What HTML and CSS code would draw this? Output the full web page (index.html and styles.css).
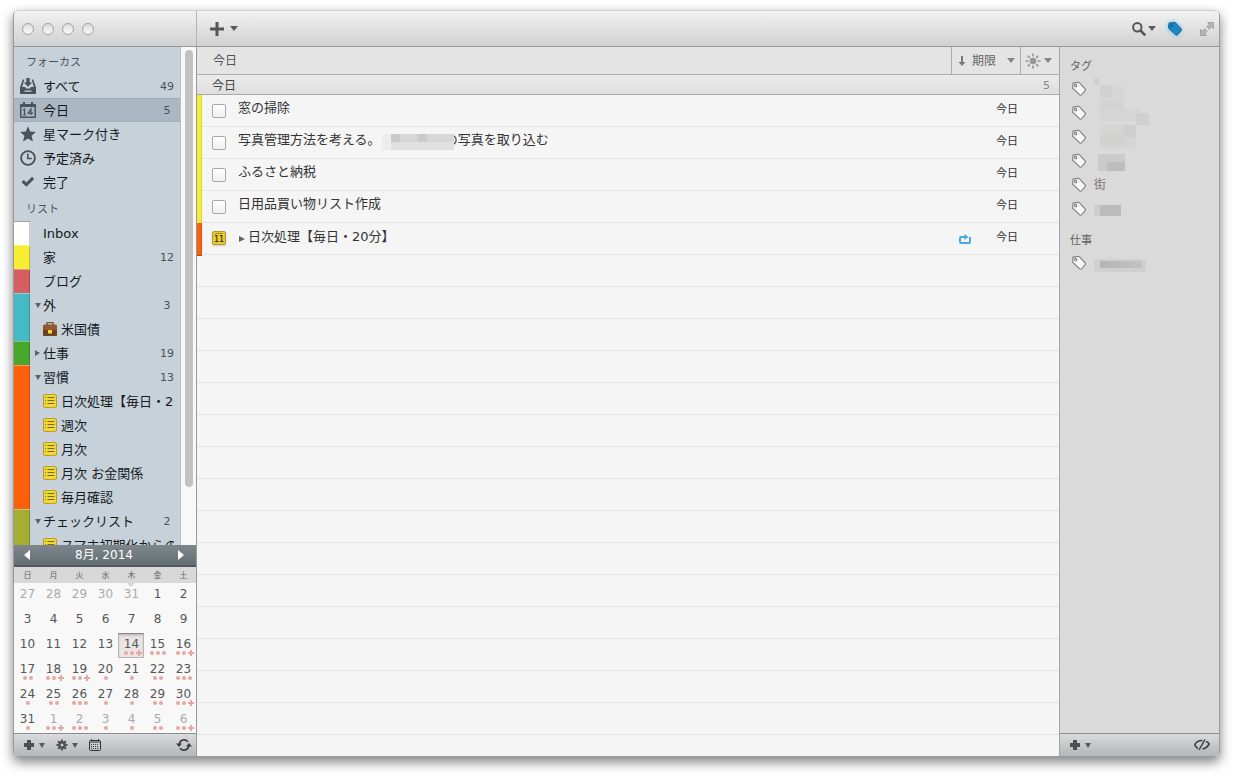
FILE: index.html
```html
<!DOCTYPE html>
<html lang="ja">
<head>
<meta charset="utf-8">
<title>今日</title>
<link rel="stylesheet" href="styles.css">
</head>
<body>
<svg class="defs" aria-hidden="true">
  <symbol id="tag" viewBox="0 0 16 16"><path d="M2 2.2 L7.2 1.4 Q8 1.3 8.6 1.9 L14.2 8 Q14.8 8.8 14.2 9.6 L10.4 13.9 Q9.6 14.6 8.8 13.9 L2.2 7.8 Q1.6 7.2 1.6 6.4 Z"/><circle cx="4.6" cy="4.6" r="1.2"/></symbol>
  <symbol id="list" viewBox="0 0 14 14"><rect x=".5" y=".5" width="13" height="13" rx="1.5" fill="#ecd93a" stroke="#c39a22"/><path d="M4.5 3.5h7M4.5 6.5h7M4.5 9.5h7" stroke="#7d6b18"/><path d="M2 3.5h1M2 6.5h1M2 9.5h1" stroke="#7d6b18"/></symbol>
  <symbol id="plus" viewBox="0 0 12 12"><path d="M4 1h4v3h3v4H8v3H4V8H1V4h3z" fill="#4c4f51"/></symbol>
  <symbol id="d1" viewBox="0 0 20 6"><circle cx="10" cy="3" r="2"/></symbol>
  <symbol id="d2" viewBox="0 0 20 6"><circle cx="7" cy="3" r="2"/><circle cx="13" cy="3" r="2"/></symbol>
  <symbol id="d3" viewBox="0 0 20 6"><circle cx="4" cy="3" r="2"/><circle cx="10" cy="3" r="2"/><circle cx="16" cy="3" r="2"/></symbol>
  <symbol id="d4" viewBox="0 0 20 6"><circle cx="4" cy="3" r="2"/><circle cx="10" cy="3" r="2"/><path d="M16 0h2v2h2v2h-2v2h-2V4h-2V2h2z"/></symbol>
</svg>

<div class="window">
  <header class="titlebar">
    <div class="lights"><button aria-label="閉じる"></button><button aria-label="しまう"></button><button aria-label="拡大"></button><button aria-label="ミニ"></button></div>
    <button class="tool add" aria-label="追加"><svg width="16" height="16"><path d="M6.5 1h3v5.5H15v3H9.5V15h-3V9.5H1v-3h5.5z" fill="#555"/></svg><i class="down"></i></button>
    <div class="tools">
      <button class="tool" aria-label="検索"><svg width="16" height="16" fill="none" stroke="#555"><circle cx="6.3" cy="6.3" r="4.2" stroke-width="2"/><path d="M9.5 9.5l4.8 4.8" stroke-width="2.5"/></svg><i class="down"></i></button>
      <button class="tool tagtool" aria-label="タグ"><svg width="16" height="16"><use href="#tag"/></svg></button>
      <button class="tool" aria-label="全画面"><svg width="16" height="16" viewBox="0 0 16 16" fill="#b5b5b5" stroke="#909090" stroke-width=".7"><path d="M8.500 1.500h6v6l-1.800-1.800-2.500 2.500-2.400-2.400 2.500-2.500zM1.500 8.500v6h6l-1.800-1.800 2.500-2.500-2.400-2.400-2.500 2.500z"/></svg></button>
    </div>
  </header>

  <div class="body">
    <aside class="sidebar">
      <div class="scroll">
        <nav class="nav">
          <h2>フォーカス</h2>
          <ul>
            <li class="row focus"><svg class="ficon" viewBox="0 0 16 16"><path d="M6.300 0h3.400v4.500h2.500L8 8.800 3.800 4.500h2.500z"/><path fill-rule="evenodd" d="M2.800 1.500H4.300L2.300 9h3l.7 1.500h4L10.700 9h3L11.700 1.500h1.500L16 9.500V15q0 1-1 1H1q-1 0-1-1V9.500zM4.500 12.500v1.200h7v-1.200z"/></svg><span class="label">すべて</span><span class="count">49</span></li>
            <li class="row focus selected"><svg class="ficon" viewBox="0 0 16 16"><path fill-rule="evenodd" d="M1 2h2V0h2v2h6V0h2v2h2q1 0 1 1v12q0 1-1 1H1q-1 0-1-1V3q0-1 1-1zM1.500 5v9.500h13V5z"/><path d="M3 8l1.500-1v6M3 13h3M11 13V7L8 11.200h5" fill="none" stroke="#4a5359" stroke-width="1.200"/></svg><span class="label">今日</span><span class="count">5</span></li>
            <li class="row focus"><svg class="ficon" viewBox="0 0 16 16"><path d="M8 .3l2.200 5.200 5.600.5-4.200 3.800 1.300 5.700L8 12.500l-4.900 3 1.300-5.700L.2 6l5.600-.5z"/></svg><span class="label">星マーク付き</span></li>
            <li class="row focus"><svg class="ficon" viewBox="0 0 16 16"><circle cx="8" cy="8" r="6.900" fill="none" stroke="#4a5359" stroke-width="1.900"/><path d="M7.800 3.500v5h4" fill="none" stroke="#4a5359" stroke-width="1.700"/></svg><span class="label">予定済み</span></li>
            <li class="row focus"><svg class="ficon" viewBox="0 0 16 16"><path d="M1.500 8.200l2.200-2.200L6.500 8.500 12 2.800l2.200 2.200-7.700 7.800z"/></svg><span class="label">完了</span></li>
          </ul>
          <h2>リスト</h2>
          <ul>
            <li class="row list first white"><i class="disc"></i><span class="label">Inbox</span></li>
            <li class="row list first yellow"><i class="disc"></i><span class="label">家</span><span class="count">12</span></li>
            <li class="row list first red"><i class="disc"></i><span class="label">ブログ</span></li>
            <li class="row list first teal"><i class="disc open"></i><span class="label">外</span><span class="count">3</span></li>
            <li class="row list teal"><i class="disc"></i><svg class="licon" viewBox="0 0 14 14"><path d="M4 3V1q0-.5.500-.5h5q.5 0 .5.500v2" fill="none" stroke="#8a5427" stroke-width="1.500"/><rect y="2.500" width="14" height="11.500" rx="1.500" fill="#8f5a33"/><path d="M0 8h14v4.500q0 1.500-1.500 1.500h-11Q0 14 0 12.500z" fill="#70401f"/><rect x="5" y="8" width="4" height="3.500" rx=".5" fill="#f4dc30"/></svg><span class="label">米国債</span></li>
            <li class="row list first green"><i class="disc shut"></i><span class="label">仕事</span><span class="count">19</span></li>
            <li class="row list first orange"><i class="disc open"></i><span class="label">習慣</span><span class="count">13</span></li>
            <li class="row list orange"><i class="disc"></i><svg class="licon"><use href="#list"/></svg><span class="label">日次処理【毎日・20分】</span></li>
            <li class="row list orange"><i class="disc"></i><svg class="licon"><use href="#list"/></svg><span class="label">週次</span></li>
            <li class="row list orange"><i class="disc"></i><svg class="licon"><use href="#list"/></svg><span class="label">月次</span></li>
            <li class="row list orange"><i class="disc"></i><svg class="licon"><use href="#list"/></svg><span class="label">月次 お金関係</span></li>
            <li class="row list orange"><i class="disc"></i><svg class="licon"><use href="#list"/></svg><span class="label">毎月確認</span></li>
            <li class="row list first olive"><i class="disc open"></i><span class="label">チェックリスト</span><span class="count">2</span></li>
            <li class="row list olive"><i class="disc"></i><svg class="licon"><use href="#list"/></svg><span class="label">スマホ初期化からの復元</span></li>
          </ul>
        </nav>
        <div class="track"><div class="thumb"></div></div>
      </div>

      <section class="calendar">
        <div class="month"><button aria-label="前の月"><i class="prev"></i></button><span>8月, 2014</span><button aria-label="次の月"><i class="next"></i></button></div>
        <table>
          <thead><tr><th>日</th><th>月</th><th>火</th><th>水</th><th class="now">木</th><th>金</th><th>土</th></tr></thead>
          <tbody>
            <tr><td class="out">27</td><td class="out">28</td><td class="out">29</td><td class="out">30</td><td class="out">31</td><td>1</td><td>2</td></tr>
            <tr><td>3</td><td>4</td><td>5</td><td>6</td><td>7</td><td>8</td><td>9</td></tr>
            <tr><td>10</td><td>11</td><td>12</td><td>13</td><td class="today">14<svg><use href="#d4"/></svg></td><td>15<svg><use href="#d3"/></svg></td><td>16<svg><use href="#d4"/></svg></td></tr>
            <tr><td>17<svg><use href="#d2"/></svg></td><td>18<svg><use href="#d4"/></svg></td><td>19<svg><use href="#d4"/></svg></td><td>20<svg><use href="#d1"/></svg></td><td>21<svg><use href="#d1"/></svg></td><td>22<svg><use href="#d2"/></svg></td><td>23<svg><use href="#d3"/></svg></td></tr>
            <tr><td>24<svg><use href="#d1"/></svg></td><td>25<svg><use href="#d2"/></svg></td><td>26<svg><use href="#d3"/></svg></td><td>27<svg><use href="#d1"/></svg></td><td>28<svg><use href="#d1"/></svg></td><td>29<svg><use href="#d2"/></svg></td><td>30<svg><use href="#d4"/></svg></td></tr>
            <tr><td>31<svg><use href="#d1"/></svg></td><td class="out">1<svg><use href="#d4"/></svg></td><td class="out">2<svg><use href="#d3"/></svg></td><td class="out">3<svg><use href="#d1"/></svg></td><td class="out">4<svg><use href="#d1"/></svg></td><td class="out">5<svg><use href="#d2"/></svg></td><td class="out">6<svg><use href="#d4"/></svg></td></tr>
          </tbody>
        </table>
      </section>
      <footer class="bar">
        <button class="tool" aria-label="リストを追加"><svg width="12" height="12"><use href="#plus"/></svg><i class="down"></i></button>
        <button class="tool" aria-label="設定"><svg width="12" height="12" viewBox="0 0 12 12"><circle cx="6" cy="6" r="2.700" fill="none" stroke="#4c4f51" stroke-width="2.400"/><path d="M6 .5v2M6 9.500v2M.5 6h2M9.500 6h2M2.100 2.100l1.400 1.400M8.500 8.500l1.400 1.400M9.900 2.100L8.500 3.500M3.500 8.500L2.100 9.900" stroke="#4c4f51" stroke-width="1.800"/></svg><i class="down"></i></button>
        <button class="tool" aria-label="カレンダー"><svg width="12" height="12" viewBox="0 0 12 12"><path d="M2.500 0v2M9.500 0v2" stroke="#333"/><rect x=".5" y="1.500" width="11" height="10" rx="1" fill="none" stroke="#333"/><path d="M1 3h10" stroke="#333"/><path d="M2 5.500h8M2 7.500h8M2 9.500h8" stroke="#444" stroke-dasharray="1 1"/></svg></button>
        <button class="tool end" aria-label="同期"><svg width="16" height="14" viewBox="0 0 16 14" fill="none" stroke="#3c3f41" stroke-width="1.600"><path d="M3.200 6A5 5 0 0 1 12 3.800M12.800 8A5 5 0 0 1 4 10.200"/><path d="M0 5.500h6L3 9zM16 8.500h-6L13 5z" fill="#3c3f41" stroke="none"/></svg></button>
      </footer>
    </aside>

    <main class="main">
      <div class="colhead"><h1>今日</h1>
        <button class="sort"><svg width="8" height="10"><path d="M3 0h2v6h2.500L4 10 .5 6H3z" fill="#777"/></svg><span>期限</span><i class="down"></i></button>
        <button class="view" aria-label="表示設定"><svg width="16" height="16" viewBox="0 0 16 16"><circle cx="8" cy="8" r="3.300" fill="#999"/><path d="M8 .5v3M8 12.500v3M.5 8h3M12.500 8h3M2.700 2.700l2.100 2.100M11.200 11.200l2.100 2.100M13.300 2.700l-2.100 2.100M4.800 11.200l-2.100 2.100" stroke="#999" stroke-width="1.700"/></svg><i class="down"></i></button>
      </div>
      <div class="group"><h2>今日</h2><span>5</span></div>
      <ul class="tasks">
        <li class="task yellow"><input type="checkbox" id="t1"><label for="t1">窓の掃除</label><span class="due">今日</span></li>
        <li class="task yellow"><input type="checkbox" id="t2"><label for="t2">写真管理方法を考える。<span class="mosaic"><i></i><i></i><i></i><i></i><i></i><i></i><i></i><i></i><i></i><i></i><i></i><i></i><i></i><i></i><i></i><i></i></span>の写真を取り込む</label><span class="due">今日</span></li>
        <li class="task yellow"><input type="checkbox" id="t3"><label for="t3">ふるさと納税</label><span class="due">今日</span></li>
        <li class="task yellow"><input type="checkbox" id="t4"><label for="t4">日用品買い物リスト作成</label><span class="due">今日</span></li>
        <li class="task orange"><span class="badge">11</span><button class="expand" aria-label="展開"><i class="right"></i></button><span class="name">日次処理【毎日・20分】</span><svg class="repeat" width="12" height="11" viewBox="0 0 12 11"><path d="M2.500 3H2q-1 0-1 1v4q0 1 1 1h8q1 0 1-1V3M2.500 3H7" fill="none" stroke="#4ba9df" stroke-width="2"/><path d="M5.500 0l4 3-4 3z" fill="#4ba9df"/></svg><span class="due">今日</span></li>
      </ul>
    </main>

    <aside class="tags">
      <div class="taglist">
        <h2>タグ</h2>
        <ul>
          <li><svg><use href="#tag"/></svg><span class="blur b1"></span></li>
          <li><svg><use href="#tag"/></svg><span class="blur b2"></span></li>
          <li><svg><use href="#tag"/></svg><span class="blur b3"></span></li>
          <li><svg><use href="#tag"/></svg><span class="blur b4"></span></li>
          <li><svg><use href="#tag"/></svg><span>街</span></li>
          <li><svg><use href="#tag"/></svg><span class="blur b6"></span></li>
        </ul>
        <h2>仕事</h2>
        <ul><li><svg><use href="#tag"/></svg><span class="blur b7"></span></li></ul>
      </div>
      <footer class="bar tagbar">
        <button class="tool" aria-label="タグを追加"><svg width="12" height="12"><use href="#plus"/></svg><i class="down"></i></button>
        <button class="tool end" aria-label="隠す"><svg width="16" height="12" viewBox="0 0 16 12" fill="none" stroke="#3c3f41" stroke-width="1.500"><path d="M8.500 1.500Q3.500 1 .8 5.500q.5 2.500 3 4M12 2.500q2 .5 3.200 2.500Q12.500 9.500 8.500 10M11 .5L5 11"/></svg></button>
      </footer>
    </aside>
  </div>
</div>
</body>
</html>
```
FILE: styles.css
```css
* { box-sizing: border-box; }
body {
  margin: 0;
  height: 100vh;
  padding: 10px 13px 19px;
  background: #fff;
  color: #333;
  font: 13px/18px "DejaVu Sans", "Noto Sans CJK JP", sans-serif;
}
h1, h2, ul { margin: 0; padding: 0; font-weight: normal; }
ul { list-style: none; }
button { margin: 0; padding: 0; border: 0; background: none; color: inherit; font: inherit; }
svg { display: block; flex: none; }
.defs { position: absolute; width: 0; height: 0; }

.window {
  height: 100%;
  display: flex;
  flex-direction: column;
  overflow: hidden;
  border: 1px solid #9a9a9a;
  border-top-color: #d0d0d0;
  border-radius: 5px;
  box-shadow: 0 5px 12px rgba(0, 0, 0, .5);
}
.titlebar {
  flex: none;
  display: flex;
  align-items: center;
  height: 36px;
  background: linear-gradient(#f2f2f2, #d0d0d0);
  border-bottom: 1px solid #989898;
}
.lights {
  display: flex;
  align-items: center;
  gap: 8px;
  width: 183px;
  height: 100%;
  padding-left: 8px;
  border-right: 1px solid #b4b4b4;
}
.lights button {
  width: 12px;
  height: 12px;
  border: 1px solid #a3a3a3;
  border-radius: 50%;
  background: linear-gradient(#dcdcdc, #fafafa);
}
.tool { display: flex; align-items: center; gap: 4px; }
.add { padding-left: 12px; }
.add .down { margin-left: 1px; }
.tools { display: flex; align-items: center; gap: 16px; margin-left: auto; padding-right: 4px; }
.tools .down { margin: 0 -5px 0 -3px; }
.tagtool { fill: #1d86c4; stroke: #125f92; filter: drop-shadow(0 0 2px #5cc0f5); }
.tagtool circle { fill: #fff; }
.down, .right, .prev, .next { display: block; width: 0; height: 0; border: solid transparent; }
.down { border-width: 5px 4px 0; border-top-color: #5a5a5a; }
.right { border-width: 3px 0 3px 6px; border-left-color: #666; }
.prev { border-width: 5px 6px 5px 0; border-right-color: #fff; }
.next { border-width: 5px 0 5px 6px; border-left-color: #fff; }

.body { flex: 1; min-height: 0; display: flex; }
.sidebar {
  flex: none;
  display: flex;
  flex-direction: column;
  width: 183px;
  border-right: 1px solid #96999c;
}
.scroll { flex: 1; min-height: 0; display: flex; overflow: hidden; background: #f8f8f8; }
.nav { flex: 1; min-width: 0; background: #c6d1da; border-right: 1px solid #b3bfc9; color: #151a1e; }
.nav h2 { height: 27px; padding: 7px 12px 0; color: #46525b; font-size: 11px; }
.row { display: flex; align-items: center; height: 24px; }
.focus { padding-left: 6px; }
.selected { background: #abb7c3; border-top: 1px solid #9eabb7; border-bottom: 1px solid #a2aeba; }
.ficon { width: 16px; height: 16px; margin-right: 7px; fill: #4a5359; }
.label { flex: 1; min-width: 0; margin-right: 6px; padding-top: 1px; overflow: hidden; white-space: nowrap; }
.count { width: 24px; margin-right: 1px; padding-top: 1px; text-align: center; color: #46525b; font-size: 11px; }
.row:has(.count) .label { margin-right: 0; }
.list::before { content: ""; width: 16px; height: 24px; box-shadow: inset -1px 0 rgba(0, 0, 0, .2); }
.first::before { border-top: 1px solid rgba(255, 255, 255, .35); }
.white::before { background: #fff; border-top-color: #9aa4ac; }
.yellow::before { background: #f7ed32; }
.red::before { background: #d65e62; }
.teal::before { background: #45bac5; }
.green::before { background: #48a62a; }
.orange::before { background: #fd5f0b; }
.olive::before { background: #a4ae32; }
.disc { width: 13px; display: flex; padding-left: 5px; }
.open::after { content: ""; border: solid transparent; border-width: 5px 3px 0; border-top-color: #59636b; }
.shut::after { content: ""; border: solid transparent; border-width: 3px 0 3px 5px; border-left-color: #59636b; }
.licon { width: 14px; height: 14px; margin-right: 4px; }
.track { width: 15px; padding: 3px 3px 58px 4px; }
.thumb { height: 100%; border-radius: 4px; background: #c2c2c2; }

.calendar { flex: none; background: #f8f8f8; }
.month {
  display: flex;
  align-items: center;
  justify-content: space-between;
  height: 22px;
  padding: 0 12px 0 10px;
  background: linear-gradient(#7d878b, #646f73);
  border-bottom: 2px solid #50595d;
  color: #fff;
  font-size: 12px;
}
table { width: 100%; border-collapse: collapse; table-layout: fixed; }
thead { background: #d8d8d8; }
th { position: relative; height: 16px; padding: 1px 0 0 1px; color: #666; font-size: 8px; line-height: 15px; font-weight: normal; }
.now::after { content: ""; position: absolute; left: 9px; top: 16px; border: solid transparent; border-width: 4px 4px 0; border-top-color: #d8d8d8; }
td { height: 25px; padding: 4px 0 0 1px; vertical-align: top; text-align: center; color: #555; font-size: 12px; line-height: 14px; }
td svg { width: 20px; height: 6px; margin: -1px auto 0; fill: #e7a8a2; }
.out { color: #aaa; }
.today { background: #eae5e4; box-shadow: inset 0 1px #888, inset 0 0 0 1px #b5b5b5, inset 0 2px 3px #aaa; }
.bar {
  flex: none;
  display: flex;
  align-items: center;
  gap: 11px;
  height: 23px;
  padding: 0 4px 0 9px;
  border-top: 1px solid #8a8c8d;
  background: linear-gradient(#d9dbdc, #b3b7b9);
}
.bar .down { border-width: 5px 3px 0; }
.bar .end { margin-left: auto; }
.tagbar { padding-right: 9px; }

.main { flex: 1; min-width: 0; display: flex; flex-direction: column; }
.colhead {
  flex: none;
  display: flex;
  align-items: center;
  height: 28px;
  border-bottom: 1px solid #ababab;
  background: #e4e4e4;
  color: #555;
  font-size: 12px;
}
.colhead h1 { flex: 1; padding-left: 16px; font-size: 12px; }
.colhead button { display: flex; align-items: center; height: 100%; border-left: 1px solid #adadad; color: #666; }
.colhead .down { border-width: 5px 4px 0; border-top-color: #858585; }
.sort { width: 69px; padding: 0 5px 0 6px; gap: 6px; }
.sort .down { margin-left: auto; }
.view { width: 39px; padding-left: 4px; gap: 3px; }
.group {
  flex: none;
  display: flex;
  justify-content: space-between;
  align-items: center;
  height: 20px;
  padding: 2px 9px 0 15px;
  border-bottom: 1px solid #ababab;
  background: linear-gradient(#ebebeb, #dedede);
  color: #444;
  font-size: 11px;
}
.group h2 { font-size: 12px; }
.group span { color: #888; }
.tasks {
  flex: 1;
  background: repeating-linear-gradient(#f5f5f5 0 31px, #e4e4e4 31px 32px);
}
.task { display: flex; align-items: flex-start; height: 32px; }
.task::before { content: ""; width: 5px; height: 32px; margin-right: 10px; border-bottom: 1px solid rgba(0, 0, 0, .25); box-shadow: inset -1px 0 rgba(0, 0, 0, .1); }
.task input {
  appearance: none;
  width: 14px;
  height: 14px;
  margin: 9px 12px 0 0;
  border: 1px solid #a9a9a9;
  border-radius: 2px;
  background: linear-gradient(#fff, #efefef);
}
.task label { flex: 1; padding-top: 4px; white-space: nowrap; }
.name { flex: 1; padding-top: 5px; white-space: nowrap; }
.due { width: 63px; padding-top: 6px; font-size: 11px; }
.badge {
  width: 14px;
  height: 14px;
  margin: 8px 12px 0 0;
  border: 1px solid #b8962a;
  border-radius: 2px;
  background: linear-gradient(#a98f22, #a98f22) 2px 1px / 8px 1px no-repeat #e2cc2f;
  box-shadow: 0 1px 2px #ccc;
  color: #111;
  font-size: 8px;
  line-height: 16px;
  text-align: center;
}
.expand { width: 10px; padding: 13px 0 0 1px; }
.repeat { margin: 11px 25px 0 0; }
.mosaic {
  position: relative;
  display: inline-grid;
  grid-template-columns: repeat(8, 9px);
  grid-auto-rows: 8px;
  width: 72px;
  margin: 0 -9px 0 1px;
  vertical-align: 2px;
}
.mosaic i { background: #d6d6d6; }
.mosaic i:nth-child(2), .mosaic i:nth-child(5) { background: #c9cacb; }
.mosaic i:nth-child(n+9) { background: #e0e0e0; }
.mosaic i:nth-child(8n+1) { background: #ececec; }

.tags {
  flex: none;
  display: flex;
  flex-direction: column;
  width: 160px;
  border-left: 1px solid #a5a5a5;
  background: #dadada;
  color: #777;
}
.taglist { flex: 1; padding-top: 9px; }
.tags h2 { padding: 2px 10px 0; font-size: 11px; color: #606060; }
.tags h2 + ul { padding: 1px 0 9px; }
.tags li { display: flex; align-items: center; height: 24px; padding-left: 11px; font-size: 12px; }
.tags li svg { width: 16px; height: 16px; margin-right: 7px; fill: #f6f6f6; stroke: #858585; stroke-width: 1.2; }
.blur { align-self: stretch; background-repeat: no-repeat; width: 56px; }
.b1 { background-image: linear-gradient(#cfd0d0, #cfd0d0), linear-gradient(#d1d1d1, #d1d1d1), linear-gradient(#d6d6d6, #d6d6d6); background-size: 8px 7px, 12px 12px, 24px 24px; background-position: -3px 1px, 6px 8px, 6px 8px; }
.b2 { background-image: linear-gradient(#d0d0d0, #d0d0d0), linear-gradient(#d2d2d2, #d2d2d2), linear-gradient(#d5d5d5, #d5d5d5); background-size: 13px 13px, 24px 8px, 40px 12px; background-position: 42px 12px, 6px 0, 6px 8px; }
.b3 { background-image: linear-gradient(#cfcfcf, #cfcfcf), linear-gradient(#d1d1d0, #d1d1d0), linear-gradient(#d5d5d5, #d5d5d5); background-size: 12px 12px, 24px 12px, 36px 24px; background-position: 30px 0, 6px 8px, 6px 0; }
.b4 { background-image: linear-gradient(#bebebf, #bebebf), linear-gradient(#cbcbcb, #cbcbcb); background-size: 18px 9px, 27px 17px; background-position: 13px 13px, 4px 5px; }
.b6 { background-image: linear-gradient(#bbbbbc, #bbbbbc), linear-gradient(#cdcdcc, #cdcdcc); background-size: 21px 11px, 28px 11px; background-position: 6px 8px, -1px 8px; }
.b7 { background-image: linear-gradient(90deg, #b5b5b5, #c2c2c2), linear-gradient(#d0d0d0, #d0d0d0); background-size: 42px 7px, 52px 13px; background-position: 6px 10px, 0 8px; }
```
